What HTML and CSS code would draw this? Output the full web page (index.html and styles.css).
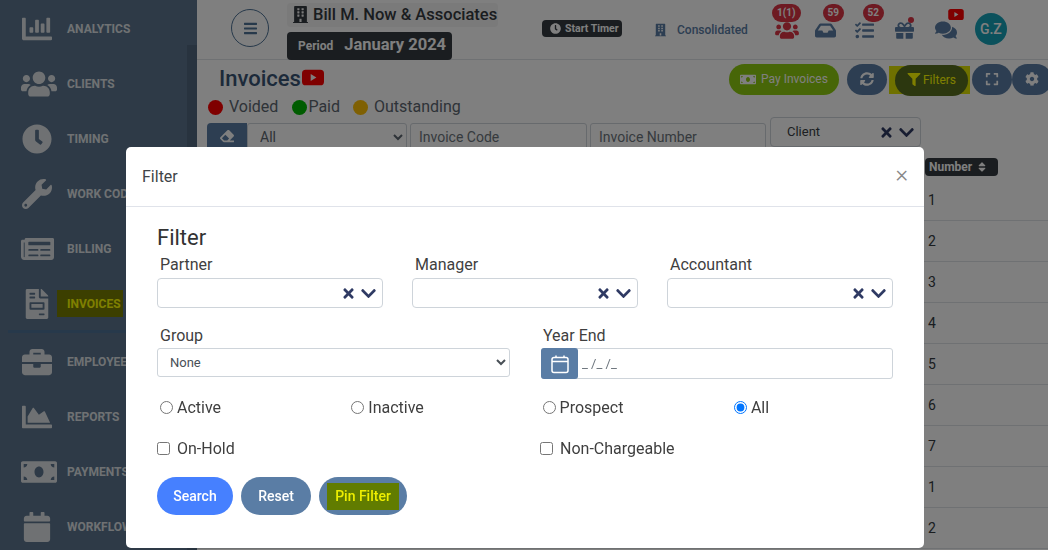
FILE: index.html
```html
<!DOCTYPE html>
<html lang="en">
<head>
  <meta charset="UTF-8">
  <meta name="viewport" content="width=device-width, initial-scale=1.0">
  <title>Invoices</title>
  <link rel="stylesheet" href="styles.css">
</head>
<body>
  <svg class="icon-defs" aria-hidden="true">
    <symbol id="i-chart-bar" viewBox="0 0 512 512"><path d="M332.8 320h38.4c6.4 0 12.8-6.4 12.8-12.8V172.8c0-6.4-6.4-12.8-12.8-12.8h-38.4c-6.4 0-12.8 6.4-12.8 12.8v134.4c0 6.4 6.4 12.8 12.8 12.8zm96 0h38.4c6.4 0 12.8-6.4 12.8-12.8V76.8c0-6.4-6.4-12.8-12.8-12.8h-38.4c-6.4 0-12.8 6.4-12.8 12.8v230.4c0 6.4 6.4 12.8 12.8 12.8zm-288 0h38.4c6.4 0 12.8-6.4 12.8-12.8v-70.4c0-6.4-6.4-12.8-12.8-12.8h-38.4c-6.4 0-12.8 6.4-12.8 12.8v70.4c0 6.4 6.4 12.8 12.8 12.8zm96 0h38.4c6.4 0 12.8-6.4 12.8-12.8V108.8c0-6.4-6.4-12.8-12.8-12.8h-38.4c-6.4 0-12.8 6.4-12.8 12.8v198.4c0 6.4 6.4 12.8 12.8 12.8zM496 384H64V80c0-8.84-7.16-16-16-16H16C7.16 64 0 71.16 0 80v336c0 17.67 14.33 32 32 32h464c8.84 0 16-7.16 16-16v-32c0-8.84-7.16-16-16-16z"/></symbol>
    <symbol id="i-users" viewBox="0 0 640 512"><path d="M96 224c35.3 0 64-28.7 64-64s-28.7-64-64-64-64 28.7-64 64 28.7 64 64 64zm448 0c35.3 0 64-28.7 64-64s-28.7-64-64-64-64 28.7-64 64 28.7 64 64 64zm32 32h-64c-17.6 0-33.5 7.1-45.1 18.6 40.3 22.1 68.9 62 75.1 109.4h66c17.7 0 32-14.3 32-32v-32c0-35.3-28.7-64-64-64zm-256 0c61.9 0 112-50.1 112-112S381.9 32 320 32 208 82.1 208 144s50.1 112 112 112zm76.8 32h-8.3c-20.8 10-43.9 16-68.5 16s-47.6-6-68.5-16h-8.3C179.6 288 128 339.6 128 403.2V432c0 26.5 21.5 48 48 48h288c26.5 0 48-21.5 48-48v-28.8c0-63.6-51.6-115.2-115.2-115.2zm-223.7-13.4C161.5 263.1 145.6 256 128 256H64c-35.3 0-64 28.7-64 64v32c0 17.7 14.3 32 32 32h65.9c6.3-47.4 34.9-87.3 75.2-109.4z"/></symbol>
    <symbol id="i-clock" viewBox="0 0 512 512"><path d="M256,8C119,8,8,119,8,256S119,504,256,504,504,393,504,256,393,8,256,8Zm92.49,313h0l-20,25a16,16,0,0,1-22.49,2.5h0l-67-49.72a40,40,0,0,1-15-31.23V112a16,16,0,0,1,16-16h32a16,16,0,0,1,16,16V256l58,42.5A16,16,0,0,1,348.49,321Z"/></symbol>
    <symbol id="i-wrench" viewBox="0 0 512 512"><path d="M507.73 109.1c-2.24-9.03-13.54-12.09-20.12-5.51l-74.36 74.36-67.88-11.31-11.31-67.88 74.36-74.36c6.62-6.62 3.43-17.9-5.66-20.16-47.38-11.74-99.55.91-136.58 37.93-39.64 39.64-50.55 97.1-34.05 147.2L18.74 402.76c-24.99 24.99-24.99 65.51 0 90.5 24.99 24.99 65.51 24.99 90.5 0l213.21-213.21c50.12 16.71 107.47 5.68 147.37-34.22 37.07-37.07 49.7-89.32 37.91-136.73zM64 472c-13.25 0-24-10.75-24-24 0-13.26 10.75-24 24-24s24 10.74 24 24c0 13.25-10.75 24-24 24z"/></symbol>
    <symbol id="i-newspaper" viewBox="0 0 576 512"><path d="M552 64H88c-13.255 0-24 10.745-24 24v8H24c-13.255 0-24 10.745-24 24v272c0 30.928 25.072 56 56 56h472c26.51 0 48-21.49 48-48V88c0-13.255-10.745-24-24-24zM56 400a8 8 0 0 1-8-8V144h16v248a8 8 0 0 1-8 8zm236-16H140c-6.627 0-12-5.373-12-12v-8c0-6.627 5.373-12 12-12h152c6.627 0 12 5.373 12 12v8c0 6.627-5.373 12-12 12zm208 0H348c-6.627 0-12-5.373-12-12v-8c0-6.627 5.373-12 12-12h152c6.627 0 12 5.373 12 12v8c0 6.627-5.373 12-12 12zm-208-96H140c-6.627 0-12-5.373-12-12v-8c0-6.627 5.373-12 12-12h152c6.627 0 12 5.373 12 12v8c0 6.627-5.373 12-12 12zm208 0H348c-6.627 0-12-5.373-12-12v-8c0-6.627 5.373-12 12-12h152c6.627 0 12 5.373 12 12v8c0 6.627-5.373 12-12 12zm0-96H140c-6.627 0-12-5.373-12-12v-40c0-6.627 5.373-12 12-12h360c6.627 0 12 5.373 12 12v40c0 6.627-5.373 12-12 12z"/></symbol>
    <symbol id="i-file-invoice" viewBox="0 0 384 512"><path fill-rule="evenodd" d="M377 105L279.1 7c-4.5-4.5-10.6-7-17-7H256v128h128v-6.1c0-6.3-2.5-12.4-7-16.9zm-153 31V0H24C10.7 0 0 10.7 0 24v464c0 13.3 10.7 24 24 24h336c13.3 0 24-10.7 24-24V160H248c-13.2 0-24-10.8-24-24zM64 72c0-4.42 3.58-8 8-8h80c4.42 0 8 3.58 8 8v16c0 4.42-3.58 8-8 8H72c-4.42 0-8-3.58-8-8V72zm0 64c0-4.42 3.58-8 8-8h80c4.42 0 8 3.58 8 8v16c0 4.42-3.58 8-8 8H72c-4.42 0-8-3.58-8-8v-16zm256 304c0 4.42-3.58 8-8 8h-80c-4.42 0-8-3.58-8-8v-16c0-4.42 3.58-8 8-8h80c4.42 0 8 3.58 8 8v16zm0-200v96c0 8.84-7.16 16-16 16H80c-8.84 0-16-7.16-16-16v-96c0-8.84 7.16-16 16-16h224c8.84 0 16 7.16 16 16zm-32 16H96v64h192z"/></symbol>
    <symbol id="i-briefcase" viewBox="0 0 512 512"><path d="M320 336c0 8.84-7.16 16-16 16h-96c-8.84 0-16-7.16-16-16v-48H0v144c0 25.6 22.4 48 48 48h416c25.6 0 48-22.4 48-48V288H320v48zm144-208h-80V80c0-25.6-22.4-48-48-48H176c-25.6 0-48 22.4-48 48v48H48c-25.6 0-48 22.4-48 48v80h512v-80c0-25.6-22.4-48-48-48zm-144 0H192V96h128v32z"/></symbol>
    <symbol id="i-chart-area" viewBox="0 0 512 512"><path d="M500 384c6.6 0 12 5.4 12 12v40c0 6.6-5.4 12-12 12H12c-6.6 0-12-5.4-12-12V76c0-6.6 5.4-12 12-12h40c6.6 0 12 5.4 12 12v308h436zM372.7 159.5L288 216l-85.3-113.7c-5.1-6.8-15.5-6.3-19.9 1L96 248v104h384l-89.9-187.8c-3.2-6.5-11.4-8.7-17.4-4.7z"/></symbol>
    <symbol id="i-money" viewBox="0 0 640 512"><path d="M608 64H32C14.33 64 0 78.33 0 96v320c0 17.67 14.33 32 32 32h576c17.67 0 32-14.33 32-32V96c0-17.67-14.33-32-32-32zM48 400v-64c35.35 0 64 28.65 64 64H48zm0-224v-64h64c0 35.35-28.65 64-64 64zm272 176c-44.19 0-80-42.99-80-96 0-53.02 35.82-96 80-96s80 42.98 80 96c0 53.03-35.83 96-80 96zm272 48h-64c0-35.35 28.65-64 64-64v64zm0-224c-35.35 0-64-28.65-64-64h64v64z"/></symbol>
    <symbol id="i-calendar" viewBox="0 0 448 512"><path d="M12 192h424c6.6 0 12 5.4 12 12v260c0 26.5-21.5 48-48 48H48c-26.5 0-48-21.5-48-48V204c0-6.6 5.4-12 12-12zm436-44v-36c0-26.5-21.5-48-48-48h-48V12c0-6.6-5.4-12-12-12h-40c-6.6 0-12 5.4-12 12v52H160V12c0-6.6-5.4-12-12-12h-40c-6.6 0-12 5.4-12 12v52H48C21.5 64 0 85.5 0 112v36c0 6.6 5.4 12 12 12h424c6.6 0 12-5.4 12-12z"/></symbol>
    <symbol id="i-bars" viewBox="0 0 448 512"><path d="M16 132h416c8.837 0 16-7.163 16-16V76c0-8.837-7.163-16-16-16H16C7.163 60 0 67.163 0 76v40c0 8.837 7.163 16 16 16zm0 160h416c8.837 0 16-7.163 16-16v-40c0-8.837-7.163-16-16-16H16c-8.837 0-16 7.163-16 16v40c0 8.837 7.163 16 16 16zm0 160h416c8.837 0 16-7.163 16-16v-40c0-8.837-7.163-16-16-16H16c-8.837 0-16 7.163-16 16v40c0 8.837 7.163 16 16 16z"/></symbol>
    <symbol id="i-building" viewBox="0 0 448 512"><path d="M436 480h-20V24c0-13.255-10.745-24-24-24H56C42.745 0 32 10.745 32 24v456H12c-6.627 0-12 5.373-12 12v20h448v-20c0-6.627-5.373-12-12-12zM128 76c0-6.627 5.373-12 12-12h40c6.627 0 12 5.373 12 12v40c0 6.627-5.373 12-12 12h-40c-6.627 0-12-5.373-12-12V76zm0 96c0-6.627 5.373-12 12-12h40c6.627 0 12 5.373 12 12v40c0 6.627-5.373 12-12 12h-40c-6.627 0-12-5.373-12-12v-40zm52 148h-40c-6.627 0-12-5.373-12-12v-40c0-6.627 5.373-12 12-12h40c6.627 0 12 5.373 12 12v40c0 6.627-5.373 12-12 12zm76 160h-64v-84c0-6.627 5.373-12 12-12h40c6.627 0 12 5.373 12 12v84zm64-172c0 6.627-5.373 12-12 12h-40c-6.627 0-12-5.373-12-12v-40c0-6.627 5.373-12 12-12h40c6.627 0 12 5.373 12 12v40zm0-96c0 6.627-5.373 12-12 12h-40c-6.627 0-12-5.373-12-12v-40c0-6.627 5.373-12 12-12h40c6.627 0 12 5.373 12 12v40zm0-96c0 6.627-5.373 12-12 12h-40c-6.627 0-12-5.373-12-12V76c0-6.627 5.373-12 12-12h40c6.627 0 12 5.373 12 12v40z"/></symbol>
    <symbol id="i-inbox" viewBox="0 0 576 512"><path d="M567.938 243.908L462.25 85.374A48.003 48.003 0 0 0 422.311 64H153.689a48 48 0 0 0-39.938 21.374L8.062 243.908A47.994 47.994 0 0 0 0 270.533V400c0 26.51 21.49 48 48 48h480c26.51 0 48-21.49 48-48V270.533a47.994 47.994 0 0 0-8.062-26.625zM162.252 128h251.497l85.333 128H376l-32 64H232l-32-64H76.918l85.334-128z"/></symbol>
    <symbol id="i-tasks" viewBox="0 0 512 512"><path d="M139.61 35.5a12 12 0 0 0-17 0L58.93 98.81l-22.7-22.12a12 12 0 0 0-17 0L3.53 92.41a12 12 0 0 0 0 17l47.59 47.4a12.78 12.78 0 0 0 17.61 0l15.59-15.62L156.52 69a12.09 12.09 0 0 0 .09-17zm0 159.19a12 12 0 0 0-17 0l-63.68 63.72-22.7-22.1a12 12 0 0 0-17 0L3.53 252a12 12 0 0 0 0 17L51 316.5a12.77 12.77 0 0 0 17.6 0l15.7-15.69 72.2-72.22a12 12 0 0 0 .09-16.9zM64 368c-26.49 0-48.59 21.5-48.59 48S37.53 464 64 464a48 48 0 0 0 0-96zm432 16H208a16 16 0 0 0-16 16v32a16 16 0 0 0 16 16h288a16 16 0 0 0 16-16v-32a16 16 0 0 0-16-16zm0-320H208a16 16 0 0 0-16 16v32a16 16 0 0 0 16 16h288a16 16 0 0 0 16-16V80a16 16 0 0 0-16-16zm0 160H208a16 16 0 0 0-16 16v32a16 16 0 0 0 16 16h288a16 16 0 0 0 16-16v-32a16 16 0 0 0-16-16z"/></symbol>
    <symbol id="i-gift" viewBox="0 0 512 512"><path d="M32 448c0 17.7 14.3 32 32 32h160V320H32v128zm256 32h160c17.7 0 32-14.3 32-32V320H288v160zm192-320h-42.1c6.2-12.1 10.1-25.5 10.1-40 0-48.5-39.5-88-88-88-41.6 0-68.5 21.3-103 68.3-34.5-47-61.4-68.3-103-68.3-48.5 0-88 39.5-88 88 0 14.5 3.8 27.9 10.1 40H32c-17.7 0-32 14.3-32 32v80c0 8.8 7.2 16 16 16h480c8.8 0 16-7.2 16-16v-80c0-17.7-14.3-32-32-32zm-326.1 0c-22.1 0-40-17.9-40-40s17.9-40 40-40c19.9 0 34.6 3.3 86.1 80h-86.1zm206.1 0h-86.1c51.4-76.5 65.7-80 86.1-80 22.1 0 40 17.9 40 40s-17.9 40-40 40z"/></symbol>
    <symbol id="i-comments" viewBox="0 0 576 512"><path d="M416 192c0-88.4-93.1-160-208-160S0 103.6 0 192c0 34.3 14.1 65.9 38 92-13.4 30.2-35.5 54.2-35.8 54.5-2.2 2.3-2.8 5.7-1.5 8.7S4.8 352 8 352c36.6 0 66.9-12.3 88.7-25 32.2 15.7 70.3 25 111.3 25 114.9 0 208-71.6 208-160zm122 220c23.9-26 38-57.7 38-92 0-66.9-53.5-124.2-129.3-148.1.9 6.6 1.3 13.3 1.3 20.1 0 105.9-107.7 192-240 192-10.8 0-21.3-.8-31.7-1.9C207.8 439.6 281.8 480 368 480c41 0 79.1-9.2 111.3-25 21.8 12.7 52.1 25 88.7 25 3.2 0 6.1-1.9 7.3-4.8 1.3-2.9.7-6.3-1.5-8.7-.3-.3-22.4-24.2-35.8-54.5z"/></symbol>
    <symbol id="i-filter" viewBox="0 0 512 512"><path d="M487.976 0H24.028C2.71 0-8.047 25.866 7.058 40.971L192 225.941V432c0 7.831 3.821 15.17 10.237 19.662l80 55.98C298.02 518.69 320 507.493 320 487.98V225.941l184.947-184.97C520.021 25.896 509.338 0 487.976 0z"/></symbol>
    <symbol id="i-sync" viewBox="0 0 512 512"><path d="M370.72 133.28C339.458 104.008 298.888 87.962 255.848 88c-77.458.068-144.328 53.178-162.791 126.85-1.344 5.363-6.122 9.15-11.651 9.15H24.103c-7.498 0-13.194-6.807-11.807-14.176C33.933 94.924 134.813 8 256 8c66.448 0 126.791 26.136 171.315 68.685L463.03 40.97C478.149 25.851 504 36.559 504 57.941V192c0 13.255-10.745 24-24 24H345.941c-21.382 0-32.09-25.851-16.971-40.971l41.75-41.749zM32 296h134.059c21.382 0 32.09 25.851 16.971 40.971l-41.75 41.75c31.262 29.273 71.835 45.319 114.876 45.28 77.418-.07 144.315-53.144 162.787-126.849 1.344-5.363 6.122-9.15 11.651-9.15h57.304c7.498 0 13.194 6.807 11.807 14.176C478.067 417.076 377.187 504 256 504c-66.448 0-126.791-26.136-171.315-68.685L48.97 471.03C33.851 486.149 8 475.441 8 454.059V320c0-13.255 10.745-24 24-24z"/></symbol>
    <symbol id="i-expand" viewBox="0 0 448 512"><path d="M0 180V56c0-13.3 10.7-24 24-24h124c6.6 0 12 5.4 12 12v40c0 6.6-5.4 12-12 12H64v84c0 6.6-5.4 12-12 12H12c-6.6 0-12-5.4-12-12zM288 44v40c0 6.6 5.4 12 12 12h84v84c0 6.6 5.4 12 12 12h40c6.6 0 12-5.4 12-12V56c0-13.3-10.7-24-24-24H300c-6.6 0-12 5.4-12 12zm148 276h-40c-6.6 0-12 5.4-12 12v84h-84c-6.6 0-12 5.4-12 12v40c0 6.6 5.4 12 12 12h124c13.3 0 24-10.7 24-24V332c0-6.6-5.4-12-12-12zM160 468v-40c0-6.6-5.4-12-12-12H64v-84c0-6.6-5.4-12-12-12H12c-6.6 0-12 5.4-12 12v124c0 13.3 10.7 24 24 24h124c6.6 0 12-5.4 12-12z"/></symbol>
    <symbol id="i-cog" viewBox="0 0 512 512"><path d="M487.4 315.7l-42.6-24.6c4.3-23.2 4.3-47 0-70.2l42.6-24.6c4.9-2.8 7.1-8.6 5.5-14-11.1-35.6-30-67.8-54.7-94.6-3.8-4.1-10-5.1-14.8-2.3L380.8 110c-17.9-15.4-38.5-27.3-60.8-35.1V25.8c0-5.6-3.9-10.5-9.4-11.7-36.7-8.2-74.3-7.8-109.2 0-5.5 1.2-9.4 6.1-9.4 11.7V75c-22.2 7.9-42.8 19.8-60.8 35.1L88.7 85.5c-4.9-2.8-11-1.9-14.8 2.3-24.7 26.7-43.6 58.9-54.7 94.6-1.7 5.4.6 11.2 5.5 14L67.3 221c-4.3 23.2-4.3 47 0 70.2l-42.6 24.6c-4.9 2.8-7.1 8.6-5.5 14 11.1 35.6 30 67.8 54.7 94.6 3.8 4.1 10 5.1 14.8 2.3l42.6-24.6c17.9 15.4 38.5 27.3 60.8 35.1v49.2c0 5.6 3.9 10.5 9.4 11.7 36.7 8.2 74.3 7.8 109.2 0 5.5-1.2 9.4-6.1 9.4-11.7v-49.2c22.2-7.9 42.8-19.8 60.8-35.1l42.6 24.6c4.9 2.8 11 1.9 14.8-2.3 24.7-26.7 43.6-58.9 54.7-94.6 1.5-5.5-.7-11.3-5.6-14.1zM256 336c-44.1 0-80-35.9-80-80s35.9-80 80-80 80 35.9 80 80-35.9 80-80 80z"/></symbol>
    <symbol id="i-eraser" viewBox="0 0 512 512"><path d="M497.941 273.941c18.745-18.745 18.745-49.137 0-67.882l-160-160c-18.745-18.745-49.136-18.746-67.883 0l-256 256c-18.745 18.745-18.745 49.137 0 67.882l96 96A48.004 48.004 0 0 0 144 480h356c6.627 0 12-5.373 12-12v-40c0-6.627-5.373-12-12-12H355.883l142.058-142.059zm-302.627-62.627l137.373 137.373L265.373 416H150.628l-80-80 124.686-124.686z"/></symbol>
    <symbol id="i-sort" viewBox="0 0 320 512"><path d="M41 288h238c21.4 0 32.1 25.9 17 41L177 448c-9.4 9.4-24.6 9.4-33.9 0L24 329c-15.1-15.1-4.4-41 17-41zm255-105L177 64c-9.4-9.4-24.6-9.4-33.9 0L24 183c-15.1 15.1-4.4 41 17 41h238c21.4 0 32.1-25.9 17-41z"/></symbol>
    <symbol id="i-chevron" viewBox="0 0 448 512"><path d="M207.029 381.476L12.686 187.132c-9.373-9.373-9.373-24.569 0-33.941l22.667-22.667c9.357-9.357 24.522-9.375 33.901-.04L224 284.505l154.745-154.021c9.379-9.335 24.544-9.317 33.901.04l22.667 22.667c9.373 9.373 9.373 24.569 0 33.941L240.971 381.476c-9.373 9.372-24.569 9.372-33.942 0z"/></symbol>
    <symbol id="i-times" viewBox="0 0 352 512"><path d="M242.72 256l100.07-100.07c12.28-12.28 12.28-32.19 0-44.48l-22.24-22.24c-12.28-12.28-32.19-12.28-44.48 0L176 189.28 75.93 89.21c-12.28-12.28-32.19-12.28-44.48 0L9.21 111.45c-12.28 12.28-12.28 32.19 0 44.48L109.28 256 9.21 356.07c-12.28 12.28-12.28 32.19 0 44.48l22.24 22.24c12.28 12.28 32.2 12.28 44.48 0L176 322.72l100.07 100.07c12.28 12.28 32.2 12.28 44.48 0l22.24-22.24c12.28-12.28 12.28-32.19 0-44.48L242.72 256z"/></symbol>
    <symbol id="i-youtube" viewBox="0 0 24 17"><rect width="24" height="17" rx="4" fill="#ff0000"/><path d="M9.5 4.8v7.4l6.2-3.7z" fill="#fff"/></symbol>
  </svg>

  <div class="layout">
    <aside class="sidebar">
      <nav class="side-nav">
        <a class="side-item"><svg class="side-icon ic-30"><use href="#i-chart-bar"/></svg><span>Analytics</span></a>
        <a class="side-item"><svg class="side-icon ic-36"><use href="#i-users"/></svg><span>Clients</span></a>
        <a class="side-item"><svg class="side-icon ic-30"><use href="#i-clock"/></svg><span>Timing</span></a>
        <a class="side-item"><svg class="side-icon ic-30"><use href="#i-wrench"/></svg><span>Work Codes</span></a>
        <a class="side-item"><svg class="side-icon ic-33"><use href="#i-newspaper"/></svg><span>Billing</span></a>
        <a class="side-item item-active"><svg class="side-icon ic-30"><use href="#i-file-invoice"/></svg><span class="side-mark">Invoices</span></a>
        <div class="side-divider"></div>
        <a class="side-item"><svg class="side-icon ic-30"><use href="#i-briefcase"/></svg><span>Employees</span></a>
        <a class="side-item"><svg class="side-icon ic-30"><use href="#i-chart-area"/></svg><span>Reports</span></a>
        <a class="side-item"><svg class="side-icon ic-36"><use href="#i-money"/></svg><span>Payments</span></a>
        <a class="side-item"><svg class="side-icon ic-30"><use href="#i-calendar"/></svg><span>Workflow</span></a>
      </nav>
      <div class="side-scroll"></div>
    </aside>

    <main class="main">
      <header class="topbar">
        <button class="menu-btn"><svg class="ic-menu"><use href="#i-bars"/></svg></button>
        <div class="brand">
          <div class="company"><svg class="ic-company"><use href="#i-building"/></svg>Bill M. Now &amp; Associates</div>
          <div class="period"><span class="period-label">Period</span><span class="period-value">January 2024</span></div>
        </div>
        <div class="timer"><svg class="ic-timer"><use href="#i-clock"/></svg>Start Timer</div>
        <div class="scope"><svg class="ic-scope"><use href="#i-building"/></svg>Consolidated</div>
        <div class="alerts">
          <div class="alert alert-users"><span class="badge badge-wide">1(1)</span><svg class="ic-users"><use href="#i-users"/></svg></div>
          <div class="alert alert-inbox"><span class="badge">59</span><svg class="ic-inbox"><use href="#i-inbox"/></svg></div>
          <div class="alert alert-tasks"><span class="badge">52</span><svg class="ic-tasks"><use href="#i-tasks"/></svg></div>
          <div class="alert alert-gift"><span class="dot"></span><svg class="ic-gift"><use href="#i-gift"/></svg></div>
          <div class="alert alert-chat"><svg class="ic-yt-small"><use href="#i-youtube"/></svg><svg class="ic-chat"><use href="#i-comments"/></svg></div>
        </div>
        <div class="avatar">G.Z</div>
      </header>

      <section class="content">
        <div class="title-row">
          <div class="title-col">
            <h1 class="page-title">Invoices<svg class="ic-yt"><use href="#i-youtube"/></svg></h1>
            <div class="legend">
              <span class="legend-item"><i class="swatch sw-red"></i>Voided</span>
              <span class="legend-item li-paid"><i class="swatch sw-green"></i>Paid</span>
              <span class="legend-item"><i class="swatch sw-amber"></i>Outstanding</span>
            </div>
          </div>
          <div class="actions">
            <button class="pill pill-green"><svg class="ic-money"><use href="#i-money"/></svg>Pay Invoices</button>
            <button class="pill pill-round"><svg class="ic-14"><use href="#i-sync"/></svg></button>
            <span class="filter-mark"><button class="pill pill-dark"><svg class="ic-filter"><use href="#i-filter"/></svg>Filters</button></span>
            <button class="pill pill-round"><svg class="ic-14"><use href="#i-expand"/></svg></button>
            <button class="pill pill-round"><svg class="ic-14"><use href="#i-cog"/></svg></button>
          </div>
        </div>

        <div class="search-row">
          <button class="erase-btn"><svg class="ic-14"><use href="#i-eraser"/></svg></button>
          <select class="bg-select"><option>All</option></select>
          <input class="bg-input code-input" placeholder="Invoice Code">
          <input class="bg-input number-input" placeholder="Invoice Number">
          <div class="client-box"><span class="client-name">Client</span><svg class="ic-x"><use href="#i-times"/></svg><svg class="ic-chev"><use href="#i-chevron"/></svg></div>
        </div>

        <div class="table">
          <div class="thead"><span class="th-pill">Number<svg class="ic-sort"><use href="#i-sort"/></svg></span></div>
          <div class="tr"><span>1</span></div>
          <div class="tr"><span>2</span></div>
          <div class="tr"><span>3</span></div>
          <div class="tr"><span>4</span></div>
          <div class="tr"><span>5</span></div>
          <div class="tr"><span>6</span></div>
          <div class="tr"><span>7</span></div>
          <div class="tr"><span>1</span></div>
          <div class="tr"><span>2</span></div>
        </div>
      </section>
    </main>
  </div>

  <div class="backdrop">
    <div class="modal">
      <div class="modal-header">
        <span class="modal-title">Filter</span>
        <span class="modal-close">×</span>
      </div>
      <div class="modal-body">
        <h2 class="filter-heading">Filter</h2>

        <div class="three-col">
          <div class="field">
            <label>Partner</label>
            <div class="combo"><svg class="ic-x"><use href="#i-times"/></svg><svg class="ic-chev"><use href="#i-chevron"/></svg></div>
          </div>
          <div class="field">
            <label>Manager</label>
            <div class="combo"><svg class="ic-x"><use href="#i-times"/></svg><svg class="ic-chev"><use href="#i-chevron"/></svg></div>
          </div>
          <div class="field">
            <label>Accountant</label>
            <div class="combo"><svg class="ic-x"><use href="#i-times"/></svg><svg class="ic-chev"><use href="#i-chevron"/></svg></div>
          </div>
        </div>

        <div class="two-col">
          <div class="field">
            <label>Group</label>
            <select class="group-select"><option>None</option></select>
          </div>
          <div class="field field-year">
            <label>Year End</label>
            <div class="date-box">
              <span class="date-btn">
                <svg class="ic-cal" viewBox="0 0 20 20"><rect x="2" y="3.5" width="16" height="15" rx="2" fill="none" stroke="#fff" stroke-width="1.5"/><path d="M2 7.5h16M6 1.5v2.5M14 1.5v2.5" stroke="#fff" stroke-width="1.5"/></svg>
              </span>
              <span class="date-mask">_ /_ /_</span>
            </div>
          </div>
        </div>

        <div class="status-row">
          <label class="opt"><input type="radio" name="status">Active</label>
          <label class="opt"><input type="radio" name="status">Inactive</label>
          <label class="opt"><input type="radio" name="status">Prospect</label>
          <label class="opt"><input type="radio" name="status" checked>All</label>
        </div>

        <div class="flag-row">
          <label class="opt opt-check"><input type="checkbox">On-Hold</label>
          <label class="opt opt-check"><input type="checkbox">Non-Chargeable</label>
        </div>

        <div class="modal-actions">
          <button class="btn btn-search">Search</button>
          <button class="btn btn-reset">Reset</button>
          <button class="btn btn-reset btn-pin"><span class="pin-mark">Pin Filter</span></button>
        </div>
      </div>
    </div>
  </div>
</body>
</html>
```

FILE: styles.css
```css
html, body {
  height: 100%;
  margin: 0;
  overflow: hidden;
}

body {
  font-family: Roboto, Arial, sans-serif;
  font-size: 14px;
  color: #5c6670;
  background-color: #fefefe;
}

svg {
  fill: currentColor;
}

button {
  font-family: inherit;
  border: none;
  cursor: pointer;
}

.icon-defs {
  display: none;
}

.layout {
  display: flex;
  height: 100%;
}

/* sidebar */
.sidebar {
  display: flex;
  flex: 0 0 197px;
  background-color: #5c748e;
  overflow: hidden;
}

.side-nav {
  flex: 0 0 187px;
  padding-top: 1px;
}

.side-scroll {
  flex: 1;
  margin-top: 45px;
  background-color: #50677e;
}

.side-item {
  display: flex;
  align-items: center;
  height: 55px;
  color: #dfe3e6;
  font-size: 12px;
  font-weight: 700;
  text-transform: uppercase;
  white-space: nowrap;
}

.side-icon {
  flex: 0 0 auto;
  margin-right: 0;
}

.ic-30 { width: 30px; height: 30px; margin-left: 22px; margin-right: 15px; }
.ic-33 { width: 33px; height: 30px; margin-left: 21px; margin-right: 13px; }
.ic-36 { width: 36px; height: 30px; margin-left: 21px; margin-right: 10px; }

.side-mark {
  margin-left: -10px;
  padding: 7px 2px 6px 10px;
  background-color: #787e00;
  color: #ffff00;
}

.item-active .side-icon {
  margin-right: 15px;
}

.side-divider {
  height: 3px;
  margin: -1px 0 1px 8px;
  background-color: #4f7396;
}

/* header */
.main {
  flex: 1;
  min-width: 0;
  overflow: hidden;
}

.topbar {
  display: flex;
  align-items: flex-start;
  height: 59px;
  border-bottom: 1px solid #dee2e6;
}

.menu-btn {
  display: flex;
  align-items: center;
  justify-content: center;
  width: 38px;
  height: 38px;
  margin: 9px 18px 0 34px;
  padding: 0;
  border: 1px solid #4f7396;
  border-radius: 50%;
  background: none;
  color: #4f7396;
}

.ic-menu {
  width: 13px;
  height: 15px;
}

.brand {
  flex: 0 0 213px;
  padding-top: 3px;
}

.company {
  display: flex;
  align-items: center;
  width: 211px;
  height: 24px;
  padding: 0 0 2px 6px;
  box-sizing: border-box;
  background-color: #f4f4f4;
  border-radius: 4px;
  color: #343a40;
  font-size: 16.5px;
  font-weight: 500;
  white-space: nowrap;
}

.ic-company {
  width: 15px;
  height: 17px;
  margin-right: 5px;
}

.period {
  display: inline-flex;
  align-items: center;
  width: 165px;
  height: 28px;
  margin-top: 5px;
  padding: 0 0 3px 11px;
  box-sizing: border-box;
  background-color: #343a40;
  border-radius: 4px;
  color: #fff;
}

.period-label {
  margin: 2px 11px 0 0;
  font-size: 12px;
  font-weight: 700;
}

.period-value {
  font-size: 16.5px;
  font-weight: 700;
}

.timer {
  display: flex;
  align-items: center;
  height: 17px;
  margin: 20px 0 0 42px;
  padding: 0 0 0 8px;
  width: 72px;
  background-color: #343a40;
  border-radius: 4px;
  color: #fff;
  font-size: 10.5px;
  font-weight: 700;
  white-space: nowrap;
}

.ic-timer {
  width: 11px;
  height: 11px;
  margin-right: 4px;
}

.scope {
  display: flex;
  align-items: center;
  margin: 23px 0 0 33px;
  color: #5a7da5;
  font-size: 12px;
  font-weight: 500;
}

.ic-scope {
  width: 11px;
  height: 14px;
  margin-right: 11px;
}

.alerts {
  display: flex;
  margin-left: 27px;
}

.alert {
  position: relative;
  display: flex;
  align-items: center;
  height: 59px;
  padding-top: 1px;
  box-sizing: border-box;
  color: #5a7da5;
}

.alert-users { width: 40px; color: #dc3545; }
.alert-inbox { width: 40px; }
.alert-tasks { width: 40px; }
.alert-gift { width: 40px; }
.alert-chat { width: 40px; }

.ic-users { width: 24px; height: 19px; }
.ic-inbox { width: 21px; height: 19px; }
.ic-tasks { width: 19px; height: 19px; }
.ic-gift { width: 19px; height: 19px; }
.ic-chat { width: 22px; height: 20px; }

.badge {
  position: absolute;
  top: 4px;
  left: 8px;
  width: 21px;
  height: 18px;
  background-color: #dc3545;
  border-radius: 9px;
  color: #fff;
  font-size: 10px;
  font-weight: 700;
  line-height: 18px;
  text-align: center;
}

.badge-wide {
  left: -3px;
  width: 29px;
}

.dot {
  position: absolute;
  top: 17px;
  left: 13px;
  width: 6px;
  height: 6px;
  background-color: #dc3545;
  border-radius: 50%;
}

.ic-yt-small {
  position: absolute;
  top: 9px;
  left: 13px;
  width: 16px;
  height: 11px;
}

.avatar {
  flex: 0 0 32px;
  height: 32px;
  margin: 13px 0 0 0;
  background-color: #17a2b8;
  border-radius: 50%;
  color: #fff;
  font-size: 14px;
  font-weight: 500;
  line-height: 32px;
  text-align: center;
}

/* page content */
.title-row {
  display: flex;
  height: 57px;
}

.title-col {
  flex: 0 0 532px;
  box-sizing: border-box;
  padding-left: 11px;
}

.page-title {
  display: flex;
  align-items: center;
  height: 37px;
  margin: 0 0 0 11px;
  color: #385474;
  font-size: 22px;
  font-weight: 500;
}

.ic-yt {
  width: 22px;
  height: 17px;
  margin: -2px 0 0 1px;
}

.legend {
  display: flex;
  font-size: 16px;
  line-height: 20px;
}

.legend-item {
  display: flex;
  align-items: center;
  margin-right: 14px;
}

.swatch {
  width: 15px;
  height: 15px;
  margin-right: 6px;
  border-radius: 50%;
}

.li-paid {
  margin-right: 13px;
}

.li-paid .swatch {
  margin-right: 1px;
}

.sw-red { background-color: #ff0000; }
.sw-green { background-color: #00b800; }
.sw-amber { background-color: #ffc107; }

.actions {
  display: flex;
  align-items: flex-start;
  flex: 0 0 323px;
  padding-top: 4px;
}

.pill {
  display: flex;
  align-items: center;
  justify-content: center;
  flex: 0 0 auto;
  height: 31px;
  padding: 0 0 1px;
  border-radius: 16px;
  background-color: #5a7da5;
  color: #fff;
  font-size: 12px;
  white-space: nowrap;
}

.pill-green {
  width: 110px;
  margin-right: 8px;
  background-color: #8fcc10;
}

.pill-round {
  width: 40px;
}

.filter-mark {
  display: flex;
  align-items: center;
  justify-content: flex-end;
  flex: 0 0 81px;
  height: 28px;
  margin: 2px 2px 0;
  padding-right: 2px;
  box-sizing: border-box;
  background-color: #dee200;
}

.filter-mark .pill {
  margin: 0;
  color: #ffff00;
  font-size: 12px;
}

.pill-dark {
  width: 73px;
  background-color: #586e1e;
}

.ic-money {
  width: 16px;
  height: 13px;
  margin-right: 5px;
}

.ic-filter {
  width: 14px;
  height: 13px;
  margin-right: 2px;
}

.ic-14 {
  width: 14px;
  height: 14px;
}

.search-row {
  display: flex;
  align-items: flex-start;
  height: 30px;
  padding-left: 10px;
}

.erase-btn {
  flex: 0 0 40px;
  height: 28px;
  margin-top: 6px;
  padding: 0;
  background-color: #5a7da5;
  border-radius: 4px 0 0 4px;
  color: #fff;
}

.bg-select,
.bg-input {
  box-sizing: border-box;
  height: 28px;
  margin-top: 6px;
  padding: 0 8px;
  background-color: #fefefe;
  border: 1px solid #ced4da;
  border-radius: 3px;
  color: #5c6670;
  font-family: inherit;
  font-size: 14px;
}

.bg-select {
  width: 160px;
  margin-right: 3px;
}

.bg-input::placeholder {
  color: #6c757d;
}

.code-input {
  width: 177px;
  margin-right: 3px;
}

.number-input {
  width: 176px;
  margin-right: 4px;
}

.client-box {
  display: flex;
  align-items: center;
  width: 151px;
  height: 30px;
  padding: 0 6px 0 16px;
  box-sizing: border-box;
  border: 1px solid #ced4da;
  border-radius: 4px;
  color: #3a3f44;
  font-size: 13px;
}

.client-name {
  margin-top: -2px;
}

.client-box .ic-x {
  margin-left: auto;
}

.ic-x {
  width: 11px;
  height: 15px;
  margin-right: 7px;
  color: #2f3a63;
}

.ic-chev {
  width: 15px;
  height: 17px;
  color: #2f3a63;
}

/* table, only the last column is visible behind the modal */
.table {
  margin-top: 11px;
}

.thead,
.tr {
  padding-left: 728px;
}

.thead {
  height: 22px;
}

.th-pill {
  display: inline-flex;
  align-items: center;
  width: 73px;
  height: 18px;
  padding-left: 4px;
  box-sizing: border-box;
  background-color: #343a40;
  border-radius: 4px;
  color: #fff;
  font-size: 12px;
  font-weight: 700;
}

.ic-sort {
  width: 8px;
  height: 12px;
  margin-left: 6px;
}

.tr {
  display: flex;
  align-items: center;
  height: 40px;
  padding-left: 731px;
  border-bottom: 1px solid #dee2e6;
  color: #343a40;
  font-size: 14px;
}

/* modal */
.backdrop {
  position: fixed;
  inset: 0;
  padding: 147px 0 0 126px;
  background-color: rgba(0, 0, 0, 0.5);
}

.modal {
  width: 798px;
  height: 401px;
  background-color: #fff;
  border-radius: 5px;
}

.modal-header {
  display: flex;
  align-items: center;
  justify-content: space-between;
  height: 59px;
  padding: 0 16px;
  border-bottom: 1px solid #e0e3ea;
}

.modal-title {
  color: #3f4448;
  font-size: 16px;
}

.modal-close {
  margin-top: -5px;
  color: #888;
  font-size: 24px;
  font-weight: 300;
}

.modal-body {
  padding: 17px 31px 0;
}

.filter-heading {
  margin: 0 0 3px;
  color: #333;
  font-size: 22px;
  font-weight: 400;
  line-height: 28px;
}

.field label {
  display: block;
  padding-left: 3px;
  color: #3f3f3f;
  font-size: 16px;
  line-height: 19px;
  margin-bottom: 4px;
}

.three-col {
  display: grid;
  grid-template-columns: repeat(3, 226px);
  column-gap: 29px;
}

.combo {
  display: flex;
  align-items: center;
  justify-content: flex-end;
  height: 30px;
  padding-right: 6px;
  box-sizing: border-box;
  border: 1px solid #ced4da;
  border-radius: 4px;
}

.two-col {
  display: grid;
  grid-template-columns: 353px 352px;
  column-gap: 31px;
  margin-top: 18px;
}

.two-col .field label {
  margin-bottom: 3px;
}

.field-year label {
  padding-left: 2px;
}

.group-select {
  width: 100%;
  height: 29px;
  padding: 0 8px;
  background-color: #fff;
  border: 1px solid #ced4da;
  border-radius: 3px;
  color: #495057;
  font-family: inherit;
  font-size: 13px;
}

.date-box {
  display: flex;
  align-items: center;
  height: 31px;
  box-sizing: border-box;
  border: 1px solid #ced4da;
  border-radius: 3px;
}

.date-btn {
  display: flex;
  align-items: center;
  justify-content: center;
  flex: 0 0 37px;
  height: 31px;
  margin-left: -1px;
  background-color: #5a7da5;
  border-radius: 3px;
}

.ic-cal {
  width: 20px;
  height: 20px;
  fill: none;
}

.date-mask {
  margin-left: 4px;
  color: #6c757d;
  font-size: 13px;
}

.status-row {
  display: grid;
  grid-template-columns: repeat(4, 191.3px);
  margin-top: 19px;
  padding-left: 3px;
}

.opt {
  display: flex;
  align-items: center;
  color: #3f3f3f;
  font-size: 16px;
  line-height: 19px;
}

.opt input {
  width: 13px;
  height: 13px;
  margin: 0 4px 0 0;
}

.flag-row {
  display: grid;
  grid-template-columns: 383px 1fr;
  margin-top: 22px;
}

.opt-check input {
  margin-right: 7px;
}

.modal-actions {
  display: flex;
  gap: 8px;
  margin-top: 19px;
}

.btn {
  display: flex;
  align-items: center;
  justify-content: center;
  height: 38px;
  padding: 0;
  border-radius: 19px;
  color: #fff;
  font-size: 14px;
  font-weight: 500;
}

.btn-search {
  width: 76px;
  background-color: #4680ff;
}

.btn-reset {
  width: 70px;
  background-color: #5a7da5;
}

.btn-pin {
  width: 88px;
}

.pin-mark {
  padding: 5px 8px 6px;
  background-color: #617c00;
  color: #eeee00;
}
```
